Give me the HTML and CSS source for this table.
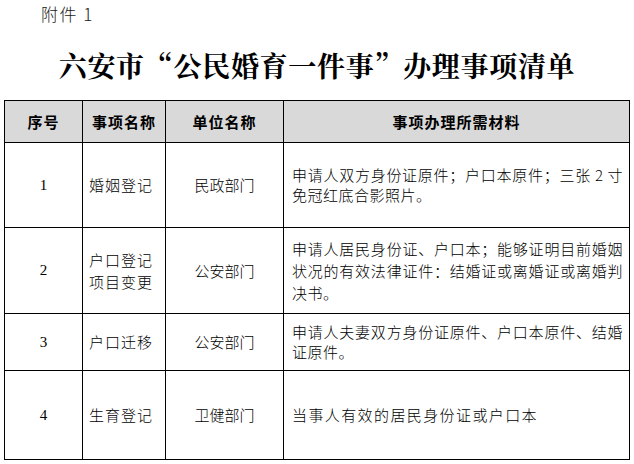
FILE: index.html
```html
<!DOCTYPE html>
<html lang="zh-CN">
<head>
<meta charset="utf-8">
<title>六安市“公民婚育一件事”办理事项清单</title>
<link rel="stylesheet" href="styles.css">
</head>
<body>
<div class="attach">附件 1</div>
<h1 class="title">六安市“公民婚育一件事”办理事项清单</h1>
<table class="list">
  <colgroup>
    <col class="c-no">
    <col class="c-name">
    <col class="c-dept">
    <col class="c-mat">
  </colgroup>
  <thead>
    <tr class="r-head">
      <th>序号</th>
      <th>事项名称</th>
      <th>单位名称</th>
      <th>事项办理所需材料</th>
    </tr>
  </thead>
  <tbody>
    <tr class="r1">
      <td class="no">1</td>
      <td class="name">婚姻登记</td>
      <td class="dept">民政部门</td>
      <td class="mat"><span class="ln">申请人双方身份证原件；户口本原件；三张 2 寸</span><span class="last">免冠红底合影照片。</span></td>
    </tr>
    <tr class="r2">
      <td class="no">2</td>
      <td class="name"><span class="last">户口登记</span><span class="last">项目变更</span></td>
      <td class="dept">公安部门</td>
      <td class="mat"><span class="ln">申请人居民身份证、户口本；能够证明目前婚姻</span><span class="ln">状况的有效法律证件：结婚证或离婚证或离婚判</span><span class="last">决书。</span></td>
    </tr>
    <tr class="r3">
      <td class="no">3</td>
      <td class="name">户口迁移</td>
      <td class="dept">公安部门</td>
      <td class="mat"><span class="ln">申请人夫妻双方身份证原件、户口本原件、结婚</span><span class="last">证原件。</span></td>
    </tr>
    <tr class="r4">
      <td class="no">4</td>
      <td class="name">生育登记</td>
      <td class="dept">卫健部门</td>
      <td class="mat wide">当事人有效的居民身份证或户口本</td>
    </tr>
  </tbody>
</table>
</body>
</html>
```

FILE: styles.css
```css
html, body {
  margin: 0;
  padding: 0;
  background: #ffffff;
}

body {
  width: 634px;
  height: 464px;
  overflow: hidden;
  color: #000;
  font-family: "Noto Sans CJK SC", "Noto Sans", sans-serif;
}

.attach {
  padding: 2px 0 0 41px;
  font-size: 17px;
  line-height: 23px;
  height: 23px;
  letter-spacing: 1.5px;
  font-weight: 300;
  color: #1a1a1a;
}

.title {
  margin: 20px 0 0 0;
  height: 40px;
  line-height: 40px;
  text-align: center;
  font-family: "Noto Serif CJK SC", "Noto Sans CJK SC", serif;
  font-weight: 700;
  font-size: 28px;
  letter-spacing: 0.7px;
  color: #000;
}

.list {
  margin: 15px 0 0 4px;
  border-collapse: collapse;
  table-layout: fixed;
  width: 625px;
  font-size: 15px;
}

.c-no { width: 78px; }
.c-name { width: 83px; }
.c-dept { width: 118px; }
.c-mat { width: 346px; }

.list th,
.list td {
  border: 1px solid #000;
  padding: 0;
  vertical-align: middle;
}

.list td { font-weight: 300; }

.list th {
  background: #d9d9d9;
  font-weight: 700;
  font-size: 15px;
  letter-spacing: 1px;
  text-align: center;
  line-height: 20px;
}

.r-head { height: 42px; }
.r1 { height: 85px; }
.r2 { height: 86px; }
.r3 { height: 57px; }
.r4 { height: 89px; }

.list td.no {
  text-align: center;
  font-family: "Liberation Serif", serif;
  font-weight: 400;
  font-size: 15px;
}

.name {
  padding-left: 6px !important;
  letter-spacing: 1px;
  line-height: 22px;
}

.dept {
  text-align: center;
  line-height: 20px;
}

.mat {
  padding: 0 6px 0 8px !important;
  letter-spacing: 0.5px;
  line-height: 20px;
}

.r2 .mat { line-height: 22px; }

.mat.wide { letter-spacing: 1.4px; }

.ln {
  display: block;
  white-space: nowrap;
  text-align: justify;
  text-align-last: justify;
}

.last {
  display: block;
  white-space: nowrap;
}
```
